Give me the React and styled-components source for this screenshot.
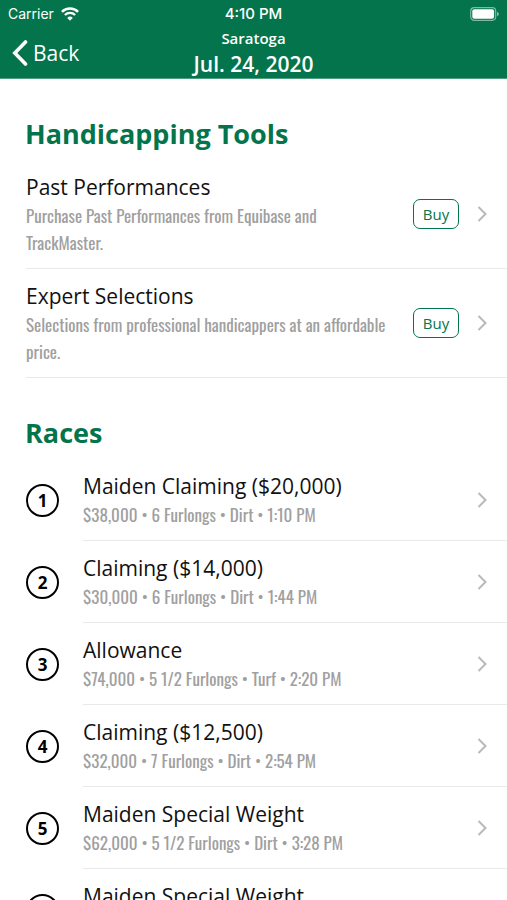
import React from "react";
import styled, { createGlobalStyle } from "styled-components";

const GREEN = "#03744b";
const NARROW = '"Oswald", "Liberation Sans Narrow", "Open Sans", sans-serif';

const GlobalStyle = createGlobalStyle`
  * { box-sizing: border-box; }
  body {
    margin: 0;
    background: #fff;
    color: #111;
    font-family: "Open Sans", "Noto Sans", sans-serif;
  }
`;

const Screen = styled.div`
  display: flex;
  flex-direction: column;
  height: 100vh;
  overflow: hidden;
`;

const Header = styled.header`
  flex: none;
  background: ${GREEN};
  color: #fff;
  border-bottom: 1px solid #4f9d81;
`;

const SideGrid = styled.div`
  display: grid;
  grid-template-columns: 1fr auto 1fr;
  align-items: center;
`;

const StatusBar = styled(SideGrid)`
  height: 27px;
  padding: 0 8px;
  font-family: "Inter", sans-serif;
  font-size: 15px;
`;

const Carrier = styled.div`
  display: flex;
  align-items: center;
  gap: 7px;
  font-size: 14px;
`;

const Clock = styled.div`
  font-weight: 500;
`;

const Battery = styled.svg`
  justify-self: end;
`;

const NavBar = styled(SideGrid)`
  height: 51px;
  padding: 0 12px;
`;

const BackButton = styled.button`
  display: flex;
  align-items: center;
  gap: 5px;
  justify-self: start;
  padding: 0;
  border: 0;
  background: none;
  color: inherit;
  font: inherit;
  font-size: 21px;
  line-height: 30px;
`;

const Heading = styled.div`
  text-align: center;
`;

const Track = styled.div`
  font-size: 15px;
  font-weight: 600;
  line-height: 22px;
`;

const RaceDate = styled.h1`
  margin: 0;
  font-size: 21px;
  font-weight: 600;
  line-height: 30px;
`;

const Content = styled.main`
  flex: 1;
  min-height: 0;
  overflow: hidden;
`;

const SectionTitle = styled.h2`
  margin: 0;
  padding: 37px 25px 8px;
  color: ${GREEN};
  font-size: 27px;
  font-weight: 700;
  line-height: 36px;
`;

const List = styled.ul`
  margin: 0;
  padding: 0 0 0 26px;
  list-style: none;
`;

const Row = styled.li`
  display: flex;
  align-items: center;
`;

const RowBody = styled.div`
  flex: 1;
  display: flex;
  align-items: center;
  min-width: 0;
  min-height: 82px;
  padding: 12px 20px 12px 0;
  border-bottom: 1px solid #e9e9e9;
`;

const RowLink = styled.a`
  flex: 1;
  align-self: flex-start;
  min-width: 0;
  color: inherit;
  text-decoration: none;
`;

const RowTitle = styled.div`
  font-size: 21px;
  line-height: 30px;
`;

const Detail = styled.div`
  color: #a0a0a0;
  font-family: ${NARROW};
  font-size: 17px;
  font-weight: 400;
  line-height: 27px;
`;

const BuyButton = styled.button`
  width: 46px;
  height: 30px;
  margin: 0 18px 0 20px;
  padding: 0;
  border: 1px solid ${GREEN};
  border-radius: 7px;
  background: #fff;
  color: ${GREEN};
  font: inherit;
  font-size: 15px;
`;

const Chevron = styled.svg`
  flex: none;
`;

const RaceNumber = styled.div`
  display: flex;
  align-items: center;
  justify-content: center;
  flex: none;
  width: 33px;
  height: 33px;
  margin-right: 24px;
  border: 2px solid #000;
  border-radius: 50%;
  color: #000;
  font-size: 17px;
  font-weight: 700;
`;

const tools = [
  {
    title: "Past Performances",
    detail: "Purchase Past Performances from Equibase and TrackMaster.",
  },
  {
    title: "Expert Selections",
    detail: "Selections from professional handicappers at an affordable price.",
  },
];

const races = [
  { title: "Maiden Claiming ($20,000)", detail: "$38,000 • 6 Furlongs • Dirt • 1:10 PM" },
  { title: "Claiming ($14,000)", detail: "$30,000 • 6 Furlongs • Dirt • 1:44 PM" },
  { title: "Allowance", detail: "$74,000 • 5 1/2 Furlongs • Turf • 2:20 PM" },
  { title: "Claiming ($12,500)", detail: "$32,000 • 7 Furlongs • Dirt • 2:54 PM" },
  { title: "Maiden Special Weight", detail: "$62,000 • 5 1/2 Furlongs • Dirt • 3:28 PM" },
  { title: "Maiden Special Weight" },
];

const Disclosure = () => (
  <Chevron width="10" height="16" viewBox="0 0 10 16" fill="none" aria-hidden="true">
    <path d="M1.5 1 L8.5 8 L1.5 15" stroke="#b9b9b9" strokeWidth="2" />
  </Chevron>
);

export default function App() {
  return (
    <>
      <GlobalStyle />
      <Screen>
        <Header>
          <StatusBar>
            <Carrier>
              Carrier
              <svg width="18" height="14" viewBox="0 0 18 14" fill="none" stroke="#fff" aria-hidden="true">
                <path d="M0.9 4.9 A11.5 11.5 0 0 1 17.1 4.9" strokeWidth="2.5" />
                <path d="M3.9 8 A7.2 7.2 0 0 1 14.1 8" strokeWidth="2.3" />
                <path d="M9 13.8 L6.2 10.9 A4 4 0 0 1 11.8 10.9 Z" fill="#fff" stroke="none" />
              </svg>
            </Carrier>
            <Clock>4:10 PM</Clock>
            <Battery width="30" height="14" viewBox="0 0 30 14" fill="none" aria-hidden="true">
              <rect x="1.7" y="0.7" width="25" height="12.6" rx="3.5" stroke="#7fb9a4" strokeWidth="1.2" />
              <rect x="3.3" y="2.3" width="21.8" height="9.4" rx="2" fill="#fff" />
              <path d="M28 4.8 Q30 5.6 30 7 Q30 8.4 28 9.2 Z" fill="#7fb9a4" />
            </Battery>
          </StatusBar>
          <NavBar>
            <BackButton type="button">
              <svg width="16" height="26" viewBox="0 0 16 26" fill="none" aria-hidden="true">
                <path d="M13.5 2 L2.8 13 L13.5 24" stroke="#fff" strokeWidth="3.6" strokeLinecap="round" />
              </svg>
              Back
            </BackButton>
            <Heading>
              <Track>Saratoga</Track>
              <RaceDate>Jul. 24, 2020</RaceDate>
            </Heading>
          </NavBar>
        </Header>
        <Content>
          <SectionTitle>Handicapping Tools</SectionTitle>
          <List>
            {tools.map((tool) => (
              <Row key={tool.title}>
                <RowBody>
                  <RowLink href="#tools">
                    <RowTitle>{tool.title}</RowTitle>
                    <Detail>{tool.detail}</Detail>
                  </RowLink>
                  <BuyButton type="button" aria-label={`Buy ${tool.title}`}>Buy</BuyButton>
                  <Disclosure />
                </RowBody>
              </Row>
            ))}
          </List>
          <SectionTitle>Races</SectionTitle>
          <List>
            {races.map((race, index) => (
              <Row key={index}>
                <RaceNumber>{index + 1}</RaceNumber>
                <RowBody>
                  <RowLink href="#races">
                    <RowTitle>{race.title}</RowTitle>
                    {race.detail && <Detail>{race.detail}</Detail>}
                  </RowLink>
                  <Disclosure />
                </RowBody>
              </Row>
            ))}
          </List>
        </Content>
      </Screen>
    </>
  );
}
